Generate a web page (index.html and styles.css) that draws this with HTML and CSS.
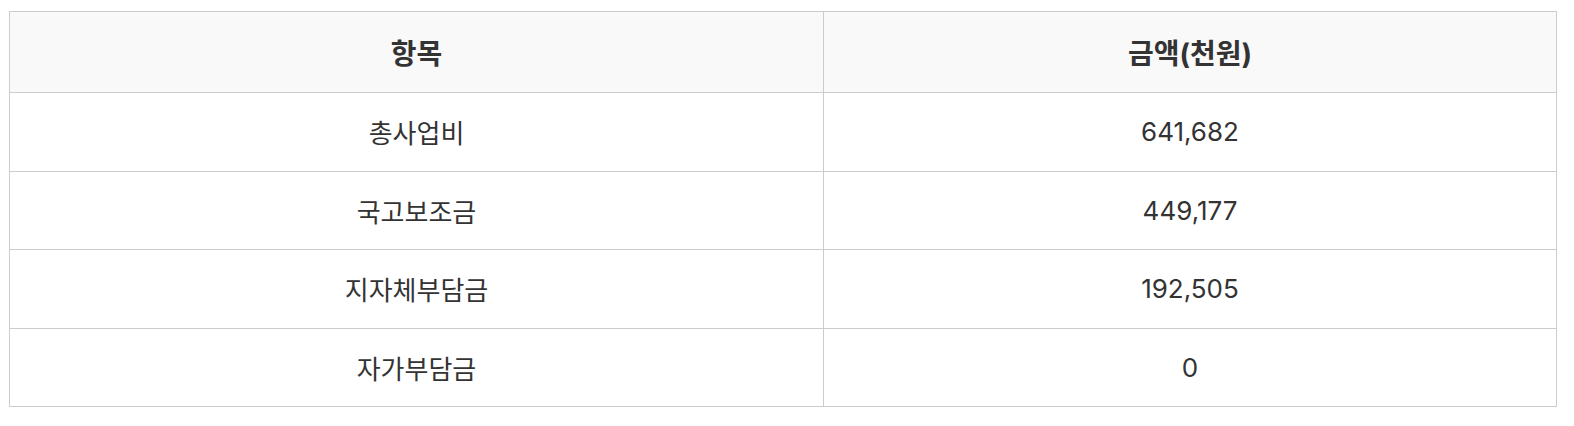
FILE: index.html
```html
<!DOCTYPE html>
<html lang="ko">
<head>
<meta charset="utf-8">
<link rel="stylesheet" href="styles.css">
</head>
<body>
<table class="budget">
  <thead>
    <tr><th class="c1">항목</th><th>금액(천원)</th></tr>
  </thead>
  <tbody>
    <tr><td>총사업비</td><td>641,682</td></tr>
    <tr><td>국고보조금</td><td>449,177</td></tr>
    <tr><td>지자체부담금</td><td>192,505</td></tr>
    <tr><td>자가부담금</td><td>0</td></tr>
  </tbody>
</table>
</body>
</html>
```
FILE: styles.css
```css
html, body {
  margin: 0;
  padding: 0;
  background: #fff;
}
body {
  padding: 11px 17px 0 9px;
  font-family: Inter, "Noto Sans CJK KR", sans-serif;
  color: #333;
}
.budget {
  width: 1548px;
  border-collapse: collapse;
  table-layout: fixed;
  font-size: 26px;
}
.budget th, .budget td {
  border: 1px solid #ccc;
  text-align: center;
  padding: 0;
}
.budget th {
  background: #f9f9f9;
  font-weight: 700;
  font-size: 28px;
  height: 80px;
}
.budget td {
  height: 77.5px;
  font-weight: 400;
}
.budget .c1 {
  width: 813px;
}
```
